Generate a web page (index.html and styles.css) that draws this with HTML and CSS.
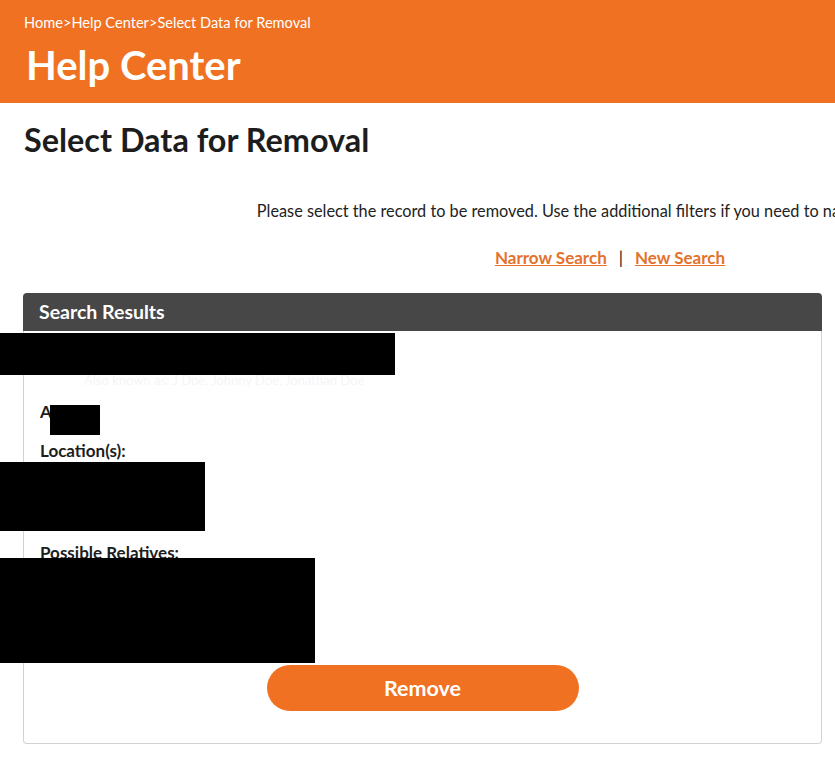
FILE: index.html
```html
<!DOCTYPE html>
<html>
<head>
<meta charset="utf-8">
<link rel="stylesheet" href="styles.css">
</head>
<body>
<header class="hero">
  <nav class="crumbs"><a>Home</a>&gt;<a>Help Center</a>&gt;<span>Select Data for Removal</span></nav>
  <div class="hero-title">Help Center</div>
</header>
<main class="main">
  <h1 class="page-title">Select Data for Removal</h1>
  <div class="wide">
    <p class="intro">Please select the record to be removed. Use the additional filters if you need to narrow your search.</p>
    <div class="links"><a class="link">Narrow Search</a><span class="sep">|</span><a class="link">New Search</a></div>
  </div>
  <section class="panel">
    <div class="panel-head">Search Results</div>
    <div class="panel-body">
      <div class="name-row">John Doe</div>
      <div class="faint">Also known as: J Doe, Johnny Doe, Jonathan Doe</div>
      <div class="field"><b>Age:</b> 00</div>
      <div class="field"><b>Location(s):</b></div>
      <div class="values">City, ST<br>City, ST<br>City, ST</div>
      <div class="field"><b>Possible Relatives:</b></div>
      <div class="values">Name<br>Name<br>Name<br>Name</div>
      <div class="actions"><button class="btn">Remove</button></div>
      <div class="redact r1"></div>
      <div class="redact r2"></div>
      <div class="redact r3"></div>
      <div class="redact r4"></div>
    </div>
  </section>
</main>
</body>
</html>
```
FILE: styles.css
```css
html, body { margin: 0; padding: 0; }
body {
  font-family: "Lato", "Open Sans", sans-serif;
  color: #1d1d1d;
  background: #fff;
  overflow-x: hidden;
  width: 835px;
}
.hero {
  background: #f07122;
  color: #fff;
  height: 103px;
  box-sizing: border-box;
  padding: 14px 24px 0;
}
.crumbs { font-size: 14.6px; line-height: 18px; }
.crumbs a, .crumbs span { color: #fff; text-decoration: none; }
.hero-title {
  font-size: 40px;
  font-weight: 700;
  line-height: 46px;
  margin-top: 10px;
  padding-left: 2px;
}
.main { padding: 0 0 0 23px; position: relative; }
.page-title {
  margin: 0;
  padding-top: 16px;
  font-size: 32.4px;
  line-height: 42px;
  font-weight: 700;
  color: #1d1d1d;
  padding-left: 1px;
}
.wide { width: 1174px; text-align: center; }
.intro {
  margin: 40px 0 0;
  font-size: 16.3px;
  line-height: 20px;
  white-space: nowrap;
  color: #222;
}
.links { margin-top: 27px; font-size: 17px; line-height: 20px; }
.link { color: #e2722c; font-weight: 700; text-decoration: underline; }
.sep { margin: 0 12px; color: #222; font-weight: 400; }
.panel {
  margin-top: 25px;
  width: 799px;
}
.panel-head {
  background: #474747;
  color: #fff;
  font-weight: 700;
  font-size: 19.5px;
  line-height: 38px;
  height: 38px;
  padding-left: 16px;
  border-radius: 4px 4px 0 0;
}
.panel-body {
  border: 1px solid #cfd3d6;
  border-top: none;
  border-radius: 0 0 4px 4px;
  height: 413px;
  box-sizing: border-box;
  padding: 10px 16px 0;
  position: relative;
}
.name-row { font-size: 20px; font-weight: 700; line-height: 28px; }
.faint { color: #f4f5f7; font-size: 13px; line-height: 18px; margin-top: 2px; padding-left: 44px; }
.field { font-size: 17px; line-height: 20px; margin-top: 13px; }
.field + .field { margin-top: 19px; }
.values { font-size: 16px; line-height: 20px; margin-top: 6px; }
.values + .field { margin-top: 16px; }
.actions { display: flex; justify-content: center; margin-top: 16px; }
.btn {
  width: 312px;
  height: 46px;
  border: none;
  border-radius: 23px;
  background: #f07122;
  color: #fff;
  font-family: inherit;
  font-weight: 700;
  font-size: 21.5px;
}
.redact { position: absolute; background: #000; }
.r1 { left: -24px; top: 2px; width: 395px; height: 42px; }
.r2 { left: 26px; top: 74px; width: 50px; height: 30px; }
.r3 { left: -24px; top: 131px; width: 205px; height: 69px; }
.r4 { left: -24px; top: 227px; width: 315px; height: 105px; }
```
